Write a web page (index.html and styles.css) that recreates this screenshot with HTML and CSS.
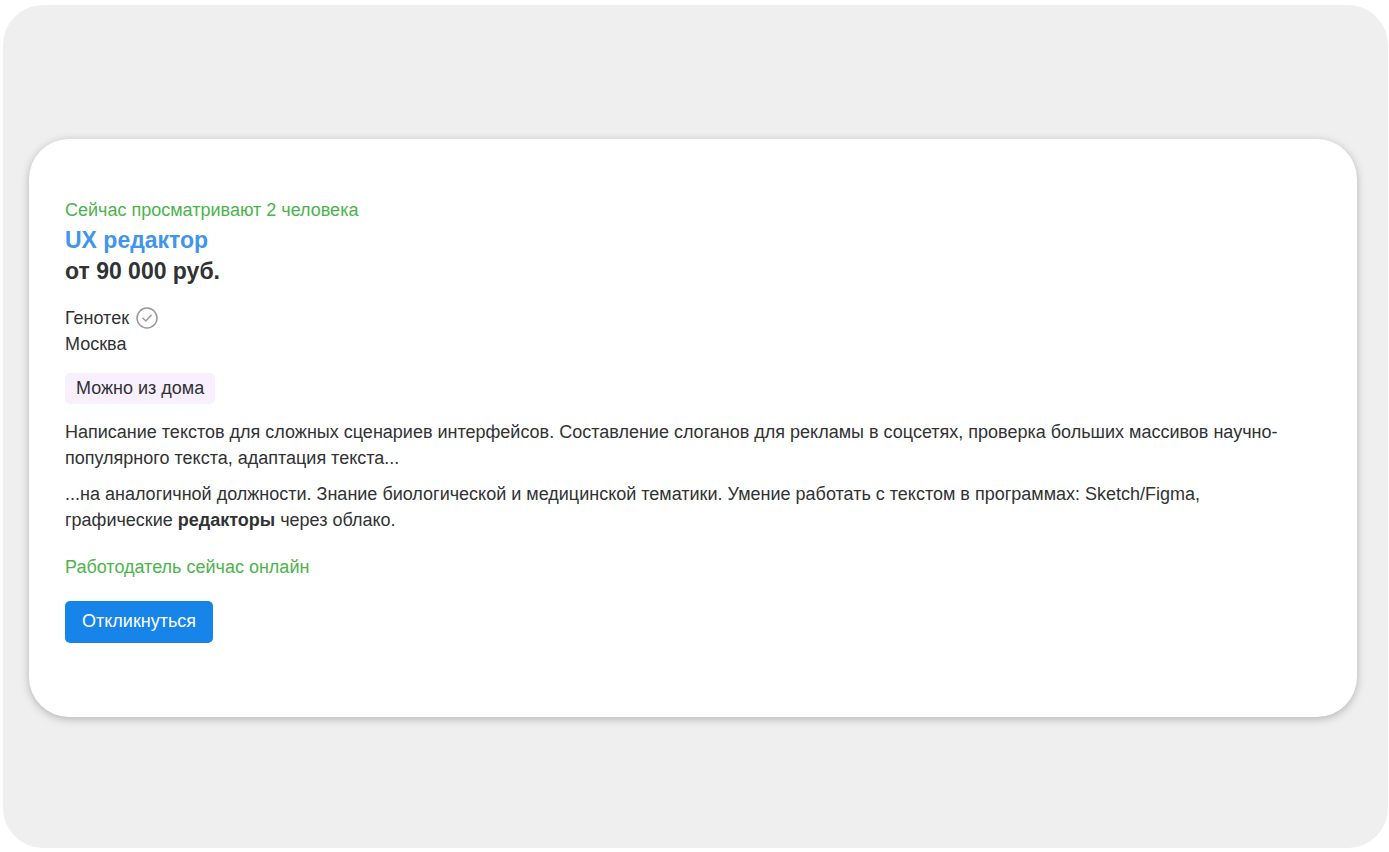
FILE: index.html
```html
<!DOCTYPE html>
<html lang="ru">
<head>
<meta charset="utf-8">
<title>UX редактор</title>
<link rel="stylesheet" href="styles.css">
</head>
<body>
<main class="page">
  <article class="card">
    <p class="status">Сейчас просматривают 2 человека</p>
    <h2 class="title"><a class="title-link" href="#">UX редактор</a></h2>
    <p class="salary">от 90&nbsp;000 руб.</p>
    <div class="employer">
      <span>Генотек</span>
      <svg class="check" viewBox="0 0 22 22" aria-hidden="true"><circle cx="11" cy="11" r="10"/><path d="M6.5 10.7l3.3 3.3 5.8-6.2"/></svg>
    </div>
    <p class="city">Москва</p>
    <span class="tag">Можно из дома</span>
    <p class="text">Написание текстов для сложных сценариев интерфейсов. Составление слоганов для рекламы в соцсетях, проверка больших массивов научно-популярного текста, адаптация текста...</p>
    <p class="text">...на аналогичной должности. Знание биологической и медицинской тематики. Умение работать с текстом в программах: Sketch/Figma, графические <b>редакторы</b> через облако.</p>
    <p class="status online">Работодатель сейчас онлайн</p>
    <button class="apply" type="button">Откликнуться</button>
  </article>
</main>
</body>
</html>
```

FILE: styles.css
```css
* { box-sizing: border-box; }
body {
  margin: 0;
  padding: 5px 1px 4px 3px;
  min-height: 100vh;
  display: flex;
  background: #fff;
  color: #303233;
  font: 18px/26px "Liberation Sans", Arial, sans-serif;
}
p, h2 { margin: 0; }
.page {
  flex: 1;
  display: flex;
  align-items: center;
  padding: 2px 31px 0 26px;
  border-radius: 40px;
  background: #efefef;
}
.card {
  flex: 1;
  display: flex;
  flex-direction: column;
  align-items: flex-start;
  padding: 58px 60px 74px 36px;
  border-radius: 40px;
  background: #fff;
  box-shadow: 0 2px 8px rgba(0, 0, 0, 0.25);
}
.status { color: #4bb34b; }
.title, .salary { font-size: 23px; line-height: 31px; font-weight: 700; }
.title { margin-top: 2px; }
.title-link { color: #4296ea; text-decoration: none; }
.employer { display: flex; align-items: center; gap: 7px; margin-top: 18px; }
.check { width: 22px; height: 22px; fill: none; stroke: #999; stroke-width: 1.5; }
.tag {
  margin: 16px 0 15px;
  padding: 2px 11px 3px;
  border-radius: 5px;
  background: #f8f0ff;
}
.text { margin-bottom: 10px; }
.online { margin-top: 11px; }
.apply {
  margin-top: 21px;
  padding: 7px 17px 9px;
  border: 0;
  border-radius: 5px;
  background: #1684e8;
  color: #fff;
  font: inherit;
}
```
